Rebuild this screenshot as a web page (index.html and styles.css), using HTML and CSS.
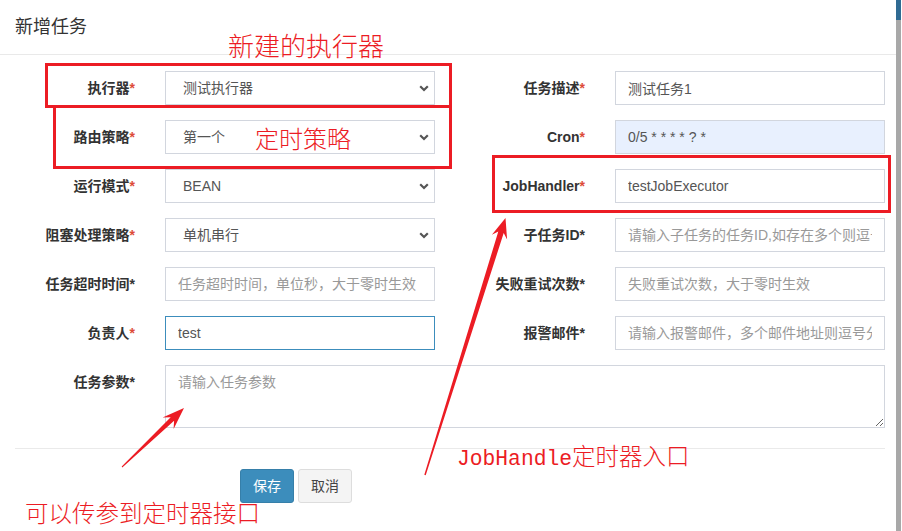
FILE: index.html
```html
<!DOCTYPE html>
<html lang="zh">
<head>
<meta charset="utf-8">
<title>新增任务</title>
<link rel="stylesheet" href="styles.css">
</head>
<body>
<div class="modal">
  <div class="modal-header"><h4 class="modal-title">新增任务</h4></div>
  <div class="modal-body">
    <form class="form-grid">
      <label class="label">执行器<span class="req">*</span></label>
      <div class="cell"><span class="select-wrap"><select class="control select"><option>测试执行器</option></select><svg class="chev" width="10" height="7" viewBox="0 0 10 7"><path d="M1.2 1.2 L5 5 L8.8 1.2" fill="none" stroke="#555" stroke-width="2.2"/></svg></span></div>
      <label class="label">任务描述<span class="req">*</span></label>
      <div class="cell"><input class="control" type="text" value="测试任务1"></div>

      <label class="label">路由策略<span class="req">*</span></label>
      <div class="cell"><span class="select-wrap"><select class="control select"><option>第一个</option></select><svg class="chev" width="10" height="7" viewBox="0 0 10 7"><path d="M1.2 1.2 L5 5 L8.8 1.2" fill="none" stroke="#555" stroke-width="2.2"/></svg></span></div>
      <label class="label">Cron<span class="req">*</span></label>
      <div class="cell"><input class="control autofill" type="text" value="0/5 * * * * ? *"></div>

      <label class="label">运行模式<span class="req">*</span></label>
      <div class="cell"><span class="select-wrap"><select class="control select"><option>BEAN</option></select><svg class="chev" width="10" height="7" viewBox="0 0 10 7"><path d="M1.2 1.2 L5 5 L8.8 1.2" fill="none" stroke="#555" stroke-width="2.2"/></svg></span></div>
      <label class="label">JobHandler<span class="req">*</span></label>
      <div class="cell"><input class="control" type="text" value="testJobExecutor"></div>

      <label class="label">阻塞处理策略<span class="req">*</span></label>
      <div class="cell"><span class="select-wrap"><select class="control select"><option>单机串行</option></select><svg class="chev" width="10" height="7" viewBox="0 0 10 7"><path d="M1.2 1.2 L5 5 L8.8 1.2" fill="none" stroke="#555" stroke-width="2.2"/></svg></span></div>
      <label class="label">子任务ID*</label>
      <div class="cell"><input class="control" type="text" placeholder="请输入子任务的任务ID,如存在多个则逗号分隔"></div>

      <label class="label">任务超时时间*</label>
      <div class="cell"><input class="control" type="text" placeholder="任务超时时间，单位秒，大于零时生效"></div>
      <label class="label">失败重试次数*</label>
      <div class="cell"><input class="control" type="text" placeholder="失败重试次数，大于零时生效"></div>

      <label class="label">负责人<span class="req">*</span></label>
      <div class="cell"><input class="control focus" type="text" value="test"></div>
      <label class="label">报警邮件*</label>
      <div class="cell"><input class="control" type="text" placeholder="请输入报警邮件，多个邮件地址则逗号分隔"></div>

      <label class="label">任务参数*</label>
      <div class="cell wide"><textarea class="control area" placeholder="请输入任务参数"></textarea></div>
    </form>
    <hr class="divider">
    <div class="actions">
      <button type="button" class="btn btn-primary">保存</button>
      <button type="button" class="btn btn-default">取消</button>
    </div>
  </div>
</div>

<div class="scrollbar"><div class="scroll-top"></div></div>

<div class="redbox box1"></div>
<div class="redbox box2"></div>
<div class="redbox box3"></div>
<div class="note note1">新建的执行器</div>
<div class="note note2">定时策略</div>
<div class="note note3"><span class="mono">JobHandle</span>定时器入口</div>
<div class="note note4">可以传参到定时器接口</div>
<svg class="arrows" width="902" height="531" viewBox="0 0 902 531">
  <polygon fill="#ec1c24" points="122.3,467.4 174.1,420.8 173.6,429.0 184,408 162.6,417.4 170.7,417.2 121.7,466.6"/>
  <polygon fill="#ec1c24" points="425.7,475.2 503.7,233.1 507.1,239.5 505.5,218 491.9,234.7 498.3,231.5 424.3,474.8"/>
</svg>
</body>
</html>
```
FILE: styles.css
```css
* { box-sizing: border-box; }
html, body { margin: 0; padding: 0; background: #fff; }
body {
  width: 902px;
  height: 531px;
  overflow: hidden;
  position: relative;
  font-family: "Liberation Sans", "Noto Sans CJK SC", sans-serif;
  font-size: 14px;
  color: #333;
}
.modal { width: 900px; }
.modal-header {
  padding: 15px;
  border-bottom: 1px solid #e9e9e9;
  height: 55px;
}
.modal-title {
  margin: 0;
  font-size: 18px;
  line-height: 24px;
  font-weight: normal;
  color: #333;
}
.modal-body { padding-top: 16px; }
.form-grid {
  display: grid;
  grid-template-columns: 150px 300px 150px 300px;
  row-gap: 15px;
  margin: 0;
}
.label {
  text-align: right;
  padding: 7px 15px 0 0;
  font-weight: bold;
  line-height: 20px;
  color: #333;
}
.req { color: #dd4b39; }
.cell { padding: 0 15px; }
.cell.wide { grid-column: span 3; }
.control {
  display: block;
  width: 100%;
  height: 34px;
  padding: 6px 12px;
  border: 1px solid #d2d6de;
  border-radius: 0;
  background: #fff;
  color: #555;
  font-family: "Liberation Sans", "Noto Sans CJK SC", sans-serif;
  font-size: 14px;
  line-height: 20px;
  outline: none;
}
.control::placeholder { color: #999; }
.control.autofill { background: #e8f0fe; }
.control.focus { border-color: #3c8dbc; }
.select-wrap { display: block; position: relative; }
.select {
  appearance: none;
  -webkit-appearance: none;
  padding-left: 17px;
}
.chev { position: absolute; right: 6px; top: 14px; }
.area { height: 63px; resize: vertical; padding-top: 6px; }
.divider {
  margin: 20px 15px 20px;
  border: 0;
  border-top: 1px solid #eaeaea;
  height: 0;
}
.actions {
  display: flex;
  gap: 4px;
  padding-left: 240px;
}
.btn {
  height: 34px;
  padding: 6px 12px;
  font-family: "Liberation Sans", "Noto Sans CJK SC", sans-serif;
  font-size: 14px;
  line-height: 20px;
  border-radius: 3px;
  border: 1px solid transparent;
}
.btn-primary { background: #3c8dbc; border-color: #367fa9; color: #fff; }
.btn-default { background: #f4f4f4; border-color: #ddd; color: #444; }

.scrollbar {
  position: absolute;
  right: 1px;
  top: 0;
  width: 5px;
  height: 531px;
  background: #a8a8a8;
}
.scroll-top { height: 20px; background: #2f6b93; }

.redbox {
  position: absolute;
  border: 3px solid #ec1c24;
}
.box1 { left: 45px; top: 63px; width: 407px; height: 45px; }
.box2 { left: 53px; top: 105px; width: 399px; height: 64px; }
.box3 { left: 492px; top: 155px; width: 399px; height: 58px; }

.note {
  position: absolute;
  color: #ec1c24;
  font-family: "Noto Sans CJK SC", sans-serif;
  font-weight: 300;
  line-height: 28px;
  white-space: nowrap;
}
.note1 { left: 228px; top: 31px; font-size: 26px; }
.note2 { left: 255px; top: 124px; font-size: 24px; }
.note3 { left: 457px; top: 441px; font-size: 23.5px; }
.note3 .mono { font-family: "Liberation Mono", monospace; font-size: 21.3px; font-weight: normal; }
.note4 { left: 25px; top: 498px; font-size: 23.5px; }
.arrows { position: absolute; left: 0; top: 0; pointer-events: none; }
```
